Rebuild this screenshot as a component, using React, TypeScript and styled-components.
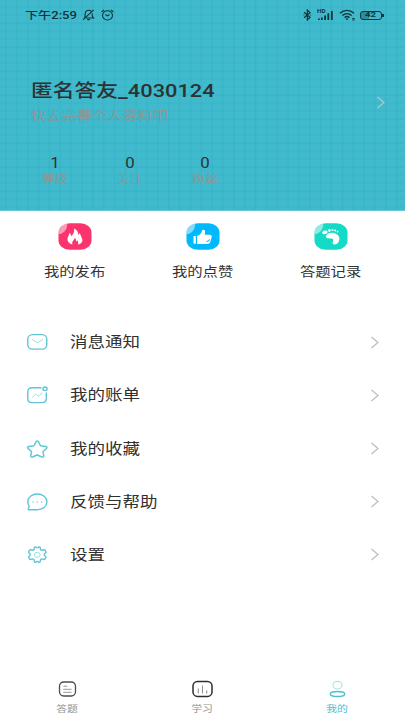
import React from 'react';
import styled, { createGlobalStyle } from 'styled-components';

const Global = createGlobalStyle`
  * { box-sizing: border-box; }
  body { margin: 0; background: #fff; font-family: Roboto, "Noto Sans CJK SC", sans-serif; }
  svg { display: block; flex: none; }
`;

const Screen = styled.div`
  width: 405px;
  height: 720px;
  display: flex;
  flex-direction: column;
  overflow: hidden;
  background: #fff;
`;

const Header = styled.header`
  height: 211px;
  flex: none;
  display: flex;
  flex-direction: column;
  border-bottom: 1px solid #65c5d2;
  background-color: #40bacc;
  background-image:
    repeating-linear-gradient(90deg, transparent 0 4.6px, #2fb0c477 6px, transparent 7.4px 10.85px),
    repeating-linear-gradient(180deg, transparent 0 22px, #2fb0c488 23px, transparent 24px),
    repeating-linear-gradient(180deg, transparent 0 6px, #2fb0c455 7px, transparent 8px);
`;

const StatusBar = styled.div`
  height: 30px;
  padding: 0 21px 0 25px;
  display: flex;
  align-items: center;
  justify-content: space-between;
  color: #12343a;
`;

const StatusGroup = styled.div<{ $gap: number }>`
  display: flex;
  align-items: center;
  gap: ${(p) => p.$gap}px;
`;

const Wide = styled.span<{
  $size: number;
  $color: string;
  $line?: number;
  $weight?: number;
  $origin?: string;
  $stretch?: number;
}>`
  display: block;
  white-space: nowrap;
  font-size: ${(p) => p.$size}px;
  line-height: ${(p) => p.$line ?? 20}px;
  font-weight: ${(p) => p.$weight ?? 400};
  color: ${(p) => p.$color};
  transform: scaleX(${(p) => p.$stretch ?? 1.2});
  transform-origin: ${(p) => p.$origin ?? 'center'};
`;

const Clock = styled.div`
  width: 51px;
  padding-top: 1px;
`;

const Profile = styled.div`
  display: flex;
  align-items: center;
  justify-content: space-between;
  margin-top: 46px;
  padding: 0 19px 0 31px;
`;

const ProfileText = styled.div`
  padding-bottom: 1px;
`;

const Stats = styled.div`
  display: flex;
  margin: 27px 0 0 17.5px;
`;

const Stat = styled.div`
  width: 75px;
  display: flex;
  flex-direction: column;
  align-items: center;
`;

const Shortcuts = styled.nav`
  height: 104.6px;
  flex: none;
  display: grid;
  grid-template-columns: repeat(3, 128.2px);
  padding: 12px 0 0 10.5px;
`;

const Shortcut = styled.div`
  display: flex;
  flex-direction: column;
  align-items: center;
  gap: 11px;
`;

const Menu = styled.main`
  flex: 1;
`;

const MenuRow = styled.div`
  height: 53.2px;
  padding: 0 25px 0 26px;
  display: grid;
  grid-template-columns: 44px 1fr auto;
  align-items: center;
`;

const TabBar = styled.nav`
  height: 46px;
  flex: none;
  display: grid;
  grid-template-columns: repeat(3, 1fr);
`;

const Tab = styled.div`
  display: flex;
  flex-direction: column;
  align-items: center;
  padding-top: 6px;
  gap: 3px;
`;

const Chevron = ({ color = '#bcbcbc' }: { color?: string }) => (
  <svg width="10" height="13" viewBox="0 0 10 13" fill="none" stroke={color} strokeWidth="1.2">
    <path d="M1.5 1 8 6.500 1.5 12" />
  </svg>
);

const BellOff = () => (
  <svg width="13" height="12" viewBox="0 0 13 12" fill="none" stroke="currentColor" strokeWidth="1.1">
    <path d="M2.5 8.8C3.4 7.5 3 6 3.2 4.5 3.5 2.5 5 1.3 6.7 1.3c1 0 2 .4 2.6 1.1M10.1 4.4c.1 1.8-.1 3.1 1.4 4.6H4.2M5.2 10.6h2.7M1 10.9 11.7.8" />
  </svg>
);

const Alarm = () => (
  <svg width="13" height="12" viewBox="0 0 13 12" fill="none" stroke="currentColor" strokeWidth="1.1">
    <ellipse cx="6.5" cy="6.4" rx="5" ry="4.6" />
    <path d="M.6 3 3 .9M12.4 3 10 .9M4.4 5.5l2.1 1.4 2.1-1.4" />
  </svg>
);

const Bluetooth = () => (
  <svg width="9" height="12" viewBox="0 0 9 12" fill="none" stroke="currentColor" strokeWidth="1.2">
    <path d="m1 3.3 6 5L4.3 11V1L7 3.6 1 8.7" />
    <path d="M.5 6h.8M7.3 6h.8" />
  </svg>
);

const SignalBox = styled.div`
  position: relative;
  width: 17px;
  height: 12px;
`;

const HdMark = styled.span`
  position: absolute;
  left: 0;
  top: -1px;
  font-size: 5px;
  line-height: 6px;
  font-weight: 700;
  transform: scaleX(1.25);
  transform-origin: left;
`;

const Signal = () => (
  <SignalBox>
    <HdMark>HD</HdMark>
    <svg width="17" height="12" viewBox="0 0 17 12" fill="currentColor">
      <path d="M1 9.5h1.8V11H1zM4 8.5h1.8V11H4zM7.2 6.5H9V11H7.2zM10.4 4.2h1.8V11h-1.8zM13.9 2h1.8v9h-1.8z" />
    </svg>
  </SignalBox>
);

const Wifi = () => (
  <svg width="17" height="12" viewBox="0 0 17 12" fill="none" stroke="currentColor" strokeWidth="1.4">
    <path d="M1 4.3C5 .4 11 .4 15 4.3M3.4 6.5c2.7-2.4 6.5-2.4 9.2 0M5.6 8.6c1.4-1.2 3.4-1.2 4.8 0" />
    <path d="m6.5 9.7 1.5 1.6 1.5-1.6q-1.5-1-3 0Z" fill="currentColor" stroke="none" />
    <path d="M13 9.5h3M13 11h3" strokeWidth=".8" />
  </svg>
);

const BatteryCase = styled.div`
  position: relative;
  width: 22px;
  height: 9px;
  border: 1px solid #12343a;
  border-radius: 3px;
  background: linear-gradient(90deg, #12343a55 38%, transparent 38%);
  display: flex;
  justify-content: center;
  align-items: center;
  margin-right: 2px;
  margin-left: -1px;
  &::after {
    content: '';
    position: absolute;
    right: -3px;
    top: 2px;
    width: 2px;
    height: 3px;
    background: #12343a;
  }
`;

const BadgeIcon = ({ color, children }: { color: string; children: React.ReactNode }) => (
  <svg width="34" height="27" viewBox="0 0 34 27">
    <rect x=".5" y=".2" width="33" height="26.6" rx="11" ry="9.5" fill={color} />
    <path d="M.5 11.1V9.7C.5 4.4 5.4.2 11.5.2c-2 0-2.4.6-2.5 2.2C8.7 7.3 5.1 10.8.5 11.1Z" fill="#fff" opacity=".5" />
    {children}
  </svg>
);

const Flame = () => (
  <BadgeIcon color="#fc346d">
    <path
      fill="#fff"
      d="M14.5 21.6c-3.2-.8-5.1-2.8-5-5.5.1-2.4 1.7-3.4 1.9-6 1.1.7 1.7 1.8 1.8 3.2 2-2 3.6-4.4 2.8-7.8 2.8 1.1 4.4 3.6 4.2 6.4.8-.5 1.1-1.1 1.2-1.9 1.5 1.6 1.4 3.4 2.5 5.2 1.5 2.8-.3 5.6-4.1 6.4.7-1.8.5-3.2-.5-4.3-.2.7-.6 1.1-1.2 1.4.1-1.8-.3-3-1.3-3.9-.1 2.2-3.5 3.4-2.3 6.8Z"
    />
  </BadgeIcon>
);

const Thumb = () => (
  <BadgeIcon color="#00b8fc">
    <path fill="#fff" d="M7.5 13h2.3v7.8H8.3q-.8 0-.8-.8ZM11 12.8c3-.5 4.4-2.6 5-5.1.3-1.3 2.7-1.2 3 .6.2 1.4-.1 2.3-.4 3.5h4.8c2 0 2.7 1 2.2 2.8l-1.3 4.5c-.4 1.3-1.4 1.8-3 1.8H11Z" />
    <path d="M20.5 18.4c1.8.1 2.8-.5 3.2-2" fill="none" stroke="#00b8fc" strokeWidth="1.1" />
  </BadgeIcon>
);

const Foot = () => (
  <BadgeIcon color="#14dac6">
    <g fill="#fff">
      <ellipse cx="10.9" cy="9.3" rx="2.8" ry="1.8" transform="rotate(-12 10.9 9.3)" />
      <ellipse cx="15.4" cy="7.5" rx="1.2" ry="1.4" />
      <circle cx="18.5" cy="7" r="1" />
      <circle cx="21.2" cy="7.5" r="1" />
      <circle cx="23.6" cy="8.6" r=".9" />
      <path d="M12 12.8c1.4-2.6 4.7-3.6 8-2.7 3.6 1 5.8 3.5 5.4 6.3-.3 2.6-2.2 4.8-4.5 5.1-2 .2-2.8-1.1-2-2.8.8-1.6.3-3-1.4-3.1-2.6-.2-6.1.1-5.5-2.8Z" />
    </g>
  </BadgeIcon>
);

const MenuIcon = ({ children }: { children: React.ReactNode }) => (
  <svg width="23" height="18" viewBox="0 0 23 18" fill="none" stroke="#61c5d4" strokeWidth="1.4" overflow="visible">
    {children}
  </svg>
);

const pale = '#9bdde5';

const menu: { label: string; icon: React.ReactNode }[] = [
  {
    label: '消息通知',
    icon: (
      <>
        <rect x="1.8" y="1.6" width="19" height="14.5" rx="4.6" />
        <path d="M6 6.3 10 9q1.4.9 2.8 0l4.1-2.7" stroke={pale} strokeWidth="1" />
      </>
    ),
  },
  {
    label: '我的账单',
    icon: (
      <>
        <path d="M15.5 1.7H6.3Q1.8 1.7 1.8 5.7V13q0 3.6 4.5 3.6h9.5q4.5 0 4.5-3.6V6.5" />
        <ellipse cx="19" cy="2.8" rx="2.1" ry="1.8" />
        <path d="m6.2 11.5 3.3-3.4 3.2 2.2 3.7-3.6" stroke={pale} strokeWidth="1" />
      </>
    ),
  },
  {
    label: '我的收藏',
    icon: <path d="M10 1.8q1.3-1.5 2.5 0l2.1 4 5.2.7q2 .6.7 2l-3.5 3.1.8 4.4q0 1.5-1.8 1l-4.8-2-4.8 2q-1.8.5-1.7-1l.9-4.4L2 8.5q-1.2-1.4.7-2l5.2-.7Z" strokeLinejoin="round" />,
  },
  {
    label: '反馈与帮助',
    icon: (
      <>
        <path d="M1.8 9C1.8 4.5 6 1 11.3 1s9.6 3.5 9.6 7.9-4.3 7.8-9.6 7.8H2.7q-1-.2-.4-1.2l.9-2.2Q1.8 11.4 1.8 9Z" />
        <path d="M6.3 9h1.5m2.8 0h1.5m2.8 0h1.5" stroke={pale} />
      </>
    ),
  },
  {
    label: '设置',
    icon: (
      <>
        <path d="M8.2 2.9V2Q8.2 1 9.4 1h.6q.5.9 1.3.9T12.6 1h.6q1.2 0 1.2 1v.9q0 1.4 1.7 1.3l1.6-.4q.9-.2 1.3.4l.9 1.5q.4.7-.3 1.2l-.8.6q-1.3 1 0 2.2l.8.6q.7.5.3 1.2l-.9 1.5q-.4.6-1.3.4l-1.6-.4q-1.7-.1-1.7 1.3v.9q0 1-1.2 1h-.6q-.5-.8-1.3-.8t-1.3.8h-.6q-1.2 0-1.2-1v-.9q0-1.4-1.7-1.3l-1.6.4q-.9.2-1.3-.4l-.9-1.5q-.4-.7.3-1.2l.8-.6q1.3-1.2 0-2.2L3 6.9q-.7-.5-.3-1.2l.9-1.5q.4-.6 1.3-.4l1.6.4q1.7.1 1.7-1.3Z" />
        <ellipse cx="11.3" cy="8.8" rx="2.9" ry="2.5" stroke={pale} strokeWidth="1" />
      </>
    ),
  },
];

const shortcuts = [
  { label: '我的发布', icon: <Flame /> },
  { label: '我的点赞', icon: <Thumb /> },
  { label: '答题记录', icon: <Foot /> },
];

const stats = [
  { label: '等级', value: 1 },
  { label: '关注', value: 0 },
  { label: '粉丝', value: 0 },
];

const tabs = [
  {
    label: '答题',
    color: '#929292',
    icon: (
      <>
        <rect x="3.5" y="2" width="16" height="14" rx="4.2" stroke="#4d4d4d" strokeWidth="1.3" />
        <path d="M7.3 6.2h4M7.3 9.3h8.2M7.3 12.3h8.2" stroke="#999" />
      </>
    ),
  },
  {
    label: '学习',
    color: '#929292',
    icon: (
      <>
        <rect x="2" y="1.4" width="19" height="15" rx="4.5" stroke="#2c2c2c" strokeWidth="1.5" />
        <path d="M7.3 8.4v5M11.5 5.5v7.9M15.7 10.6v2.8" stroke="#909090" strokeWidth="1.1" />
      </>
    ),
  },
  {
    label: '我的',
    color: '#50bdcd',
    icon: (
      <>
        <ellipse cx="11.5" cy="5.2" rx="4.5" ry="3.8" stroke="#a8e2e9" strokeWidth="1.1" />
        <ellipse cx="11.5" cy="14" rx="7.2" ry="2.5" stroke="#50bdcd" strokeWidth="1.4" />
      </>
    ),
  },
];

export default function App() {
  return (
    <>
      <Global />
      <Screen>
        <Header>
          <StatusBar>
            <StatusGroup $gap={6}>
              <Clock>
                <Wide $size={10.4} $weight={500} $color="#12343a" $origin="left" $stretch={1.26}>下午2:59</Wide>
              </Clock>
              <BellOff />
              <Alarm />
            </StatusGroup>
            <StatusGroup $gap={5}>
              <Bluetooth />
              <Signal />
              <Wifi />
              <BatteryCase>
                <Wide $size={8} $line={8} $weight={700} $color="#12343a">42</Wide>
              </BatteryCase>
            </StatusGroup>
          </StatusBar>
          <Profile>
            <ProfileText>
              <Wide $size={18} $line={29} $weight={500} $color="#2d3233" $origin="left" $stretch={1.21}>匿名答友_4030124</Wide>
              <Wide $size={12.7} $line={22} $color="#899799" $origin="left">快去完善个人资料吧</Wide>
            </ProfileText>
            <Chevron color="#b8c6c7" />
          </Profile>
          <Stats>
            {stats.map((s) => (
              <Stat key={s.label}>
                <Wide $size={14} $line={17} $color="#2d3233">{s.value}</Wide>
                <Wide $size={10.8} $line={16} $color="#899799">{s.label}</Wide>
              </Stat>
            ))}
          </Stats>
        </Header>
        <Shortcuts>
          {shortcuts.map((s) => (
            <Shortcut key={s.label}>
              {s.icon}
              <Wide $size={12.8} $line={22} $color="#333">{s.label}</Wide>
            </Shortcut>
          ))}
        </Shortcuts>
        <Menu>
          {menu.map((m) => (
            <MenuRow key={m.label}>
              <MenuIcon>{m.icon}</MenuIcon>
              <Wide $size={14.6} $line={24} $color="#303030" $origin="left">{m.label}</Wide>
              <Chevron />
            </MenuRow>
          ))}
        </Menu>
        <TabBar>
          {tabs.map((t) => (
            <Tab key={t.label}>
              <svg width="23" height="18" viewBox="0 0 23 18" fill="none">{t.icon}</svg>
              <Wide $size={9} $line={16} $color={t.color}>{t.label}</Wide>
            </Tab>
          ))}
        </TabBar>
      </Screen>
    </>
  );
}
